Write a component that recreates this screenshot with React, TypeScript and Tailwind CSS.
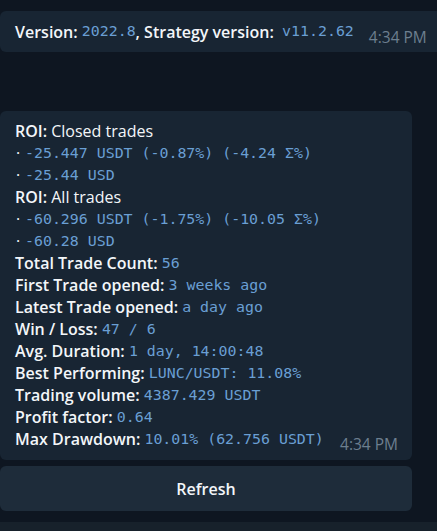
import React from "react";

const mono = "font-['DejaVu_Sans_Mono',monospace] text-[14.9px] text-[#6a9fd3]";
const sans = "font-['Open_Sans',sans-serif]";

function Row({ label, value }: { label: string; value: string }) {
  return (
    <div className="h-[22px] flex items-center whitespace-pre">
      <span className="font-semibold text-[#f3f6f9]">{label} </span>
      <span className={mono}>{value}</span>
    </div>
  );
}

function Bullet({ value }: { value: string }) {
  return (
    <div className="h-[22px] flex items-center whitespace-pre">
      <span className="text-[#f3f6f9] w-[10px] pl-[1px]">·</span>
      <span className={mono}>{value}</span>
    </div>
  );
}

export default function App() {
  return (
    <div className={`w-[437px] h-[531px] bg-[#0e1621] overflow-hidden flex flex-col ${sans} text-[16px]`}>
      <div className="mt-[11px] w-[460px] h-[41px] bg-[#182533] rounded-md flex items-center pl-[15px] whitespace-pre">
        <span className="font-semibold text-[#f3f6f9]">Version: </span>
        <span className={mono}>2022.8</span>
        <span className="font-semibold text-[#f3f6f9]">, Strategy version:  </span>
        <span className={mono}>v11.2.62</span>
        <span className="ml-[15px] mt-[12px] text-[15.5px] text-[#6d7f8f]">4:34 PM</span>
      </div>

      <div className="mt-[59px] w-[412px] bg-[#182533] rounded-md pl-[15px] pr-[14px] pt-[9px] pb-[10px] leading-[22px]">
        <div className="h-[22px] flex items-center whitespace-pre">
          <span className="font-semibold text-[#f3f6f9]">ROI: </span>
          <span className="text-[#f3f6f9]">Closed trades</span>
        </div>
        <Bullet value="-25.447 USDT (-0.87%) (-4.24 Σ%)" />
        <Bullet value="-25.44 USD" />
        <div className="h-[22px] flex items-center whitespace-pre">
          <span className="font-semibold text-[#f3f6f9]">ROI: </span>
          <span className="text-[#f3f6f9]">All trades</span>
        </div>
        <Bullet value="-60.296 USDT (-1.75%) (-10.05 Σ%)" />
        <Bullet value="-60.28 USD" />
        <Row label="Total Trade Count:" value="56" />
        <Row label="First Trade opened:" value="3 weeks ago" />
        <Row label="Latest Trade opened:" value="a day ago" />
        <Row label="Win / Loss:" value="47 / 6" />
        <Row label="Avg. Duration:" value="1 day, 14:00:48" />
        <Row label="Best Performing:" value="LUNC/USDT: 11.08%" />
        <Row label="Trading volume:" value="4387.429 USDT" />
        <Row label="Profit factor:" value="0.64" />
        <div className="h-[22px] flex items-center whitespace-pre">
          <span className="font-semibold text-[#f3f6f9]">Max Drawdown: </span>
          <span className={mono}>10.01% (62.756 USDT)</span>
          <span className="ml-auto mt-[10px] text-[15.5px] text-[#6d7f8f]">4:34 PM</span>
        </div>
      </div>

      <div className="mt-[6px] w-[412px] h-[45px] bg-[#1e2c3a] rounded-md flex items-center justify-center">
        <span className="font-semibold text-[#f3f6f9]">Refresh</span>
      </div>

      <div className="mt-[11px] flex-1 bg-[#17212b]" />
    </div>
  );
}
